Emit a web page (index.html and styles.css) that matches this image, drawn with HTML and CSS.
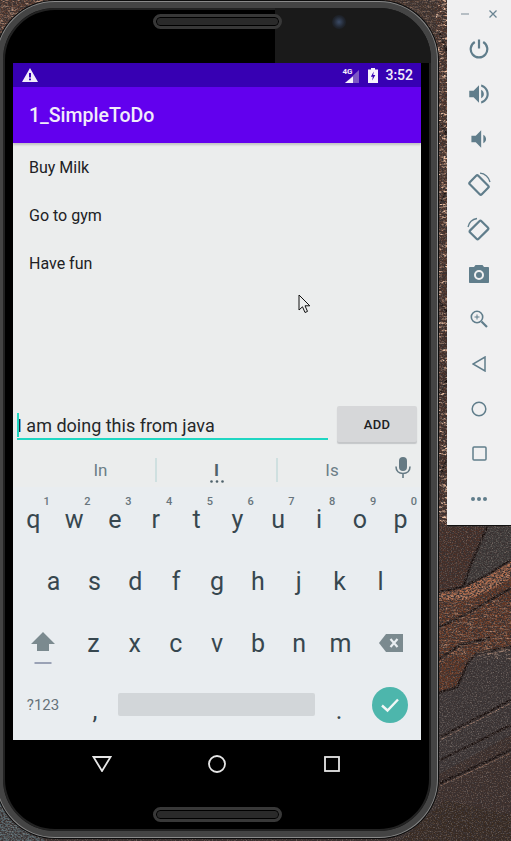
FILE: index.html
```html
<!DOCTYPE html>
<html>
  <head>
    <meta charset="UTF-8">
    <title>1_SimpleToDo</title>
    <link rel="stylesheet" href="styles.css">
  </head>
  <body>
    <svg class="wallpaper" width="511" height="841" viewBox="0 0 511 841">
      <defs>
        <filter id="grain" x="0" y="0" width="100%" height="100%">
          <feTurbulence type="fractalNoise" baseFrequency="0.5 0.7" numOctaves="4" seed="7"/>
          <feColorMatrix values="0 0 0 0 0.04  0 0 0 0 0.03  0 0 0 0 0.03  3.4 0 0 0 -1.2"/>
        </filter>
        <filter id="speck" x="0" y="0" width="100%" height="100%">
          <feTurbulence type="fractalNoise" baseFrequency="0.8" numOctaves="2" seed="21"/>
          <feColorMatrix values="0 0 0 0 0.75  0 0 0 0 0.6  0 0 0 0 0.5  0 3 0 0 -1.5"/>
        </filter>
        <filter id="streak" x="0" y="0" width="100%" height="100%">
          <feTurbulence type="fractalNoise" baseFrequency="0.12 0.45" numOctaves="3" seed="11"/>
          <feColorMatrix values="0 0 0 0 0.85  0 0 0 0 0.52  0 0 0 0 0.36  0 4.5 0 0 -2.2"/>
        </filter>
      </defs>
      <rect width="511" height="841" fill="#3e3330"/>
      <polygon points="0,0 70,0 0,60" fill="#5a3a2d"/>
      <polygon points="380,0 447,0 447,80" fill="#47352c"/>
      <rect x="436" y="0" width="11" height="300" fill="#52352a"/>
      <rect x="436" y="300" width="11" height="227" fill="#472d25"/>
      <polygon points="438,527 487,527 470,567 463,587 438,592" fill="#4a2f26"/>
      <polygon points="487,527 511,527 511,573 463,587 470,567" fill="#42403f"/>
      <polygon points="438,595 467,595 487,587 511,573 511,647 477,653 468,663 457,687 438,693" fill="#693823"/>
      <polygon points="438,590 463,587 487,576 511,560 511,578 487,592 467,600 438,600" fill="#b06c4c"/>
      <polygon points="438,693 457,687 468,663 477,653 511,647 511,735 438,775" fill="#403b3c"/>
      <polygon points="438,775 511,735 511,841 438,841" fill="#3f302b"/>
      <polygon points="0,790 45,841 0,841" fill="#56666c"/>
      <polygon points="400,841 445,800 511,815 511,841" fill="#38291f"/>
      <g fill="none" stroke="#160d0b" stroke-width="2.5">
        <path d="M438 592 L463 587 L487 575 L511 560"/>
        <path d="M438 693 L457 687 L468 663 L477 653 L511 647"/>
        <path d="M487 527 L470 567 L463 587"/>
        <path d="M438 628 L470 612 L511 588"/>
        <path d="M438 660 L460 645 L490 638"/>
        <path d="M440 737 L511 700"/>
        <path d="M440 760 L511 725"/>
        <path d="M440 783 L511 750"/>
        <path d="M438 30 L447 52 M438 120 L447 135 M438 210 L447 190 M438 300 L447 312 M438 395 L447 380 M438 480 L447 460"/>
      </g>
      <g fill="none" stroke="#bb8f78" stroke-width="1" opacity="0.75">
        <path d="M438 596 L467 596 L487 588 L511 574"/>
        <path d="M438 663 L460 648"/>
        <path d="M440 740 L511 703"/>
        <path d="M440 786 L511 753"/>
        <path d="M477 656 L511 650"/>
      </g>
      <rect x="436" y="0" width="11" height="527" filter="url(#streak)"/>
      <rect x="0" y="0" width="70" height="40" filter="url(#streak)" opacity="0.6"/>
      <rect x="400" y="0" width="47" height="60" filter="url(#streak)" opacity="0.35"/>
      <rect x="438" y="600" width="73" height="60" filter="url(#streak)" opacity="0.4"/>
      <rect width="511" height="841" filter="url(#grain)"/>
      <rect width="511" height="841" filter="url(#speck)" opacity="0.3"/>
    </svg>

    <div class="phone">
      <div class="bezel-right"></div>
      <div class="speaker speaker-top"></div>
      <div class="camera"></div>
      <div class="speaker speaker-bottom"></div>

      <div class="screen">
        <div class="statusbar">
          <svg class="warn" width="16" height="14" viewBox="0 0 16 14"><path d="M8 0 L16 14 H0 Z M7 5 V9.5 H9 V5 Z M7 10.5 V12.3 H9 V10.5 Z" fill="#f1ecfa" fill-rule="evenodd"/></svg>
          <span class="spacer"></span>
          <span class="net">4G</span>
          <svg class="signal" width="14" height="13" viewBox="0 0 14 13"><path d="M14 0 V13 H0 Z" fill="#7d58c4"/><path d="M8 6.5 V13 H0 Z" fill="#f6f3fc"/></svg>
          <svg class="battery" width="10" height="15" viewBox="0 0 10 15"><path d="M3 0 H7 V1.5 H10 V15 H0 V1.5 H3 Z M5.8 3.5 L2.8 8.8 H4.8 L4.2 12.6 L7.3 7 H5.2 Z" fill="#f6f3fc" fill-rule="evenodd"/></svg>
          <span class="clock">3:52</span>
        </div>
        <div class="appbar">1_SimpleToDo</div>

        <div class="content">
          <div class="item">Buy Milk</div>
          <div class="item">Go to gym</div>
          <div class="item">Have fun</div>
          <svg class="pointer" width="13" height="20" viewBox="0 0 13 20"><path d="M1 1 V16 L4.5 12.8 L7 18.5 L9.5 17.4 L7 11.8 H11.8 Z" fill="#eceeee" stroke="#111" stroke-width="1"/></svg>
          <div class="addrow">
            <div class="field"><span class="caret"></span>I am doing this from java</div>
            <div class="addbtn">ADD</div>
          </div>
        </div>

        <div class="suggestions">
          <div class="sugg sugg-first">In</div>
          <div class="sugg sugg-main">I
            <svg class="dots" width="14" height="3" viewBox="0 0 14 3"><circle cx="1.5" cy="1.5" r="1.3" fill="#4f626b"/><circle cx="7" cy="1.5" r="1.3" fill="#4f626b"/><circle cx="12.5" cy="1.5" r="1.3" fill="#4f626b"/></svg>
          </div>
          <div class="sugg sugg-last">Is</div>
          <svg class="mic" width="16" height="22" viewBox="0 0 16 22"><rect x="4" y="0" width="8" height="14" rx="4" fill="#657a84"/><path d="M1 9.5 C1 14 4 16.5 8 16.5 C12 16.5 15 14 15 9.5 M8 16.5 V21" fill="none" stroke="#657a84" stroke-width="1.6"/></svg>
        </div>

        <div class="keyboard">
          <div class="row">
            <div class="key">q<sup>1</sup></div>
            <div class="key">w<sup>2</sup></div>
            <div class="key">e<sup>3</sup></div>
            <div class="key">r<sup>4</sup></div>
            <div class="key">t<sup>5</sup></div>
            <div class="key">y<sup>6</sup></div>
            <div class="key">u<sup>7</sup></div>
            <div class="key">i<sup>8</sup></div>
            <div class="key">o<sup>9</sup></div>
            <div class="key">p<sup>0</sup></div>
          </div>
          <div class="row row-home">
            <div class="key">a</div>
            <div class="key">s</div>
            <div class="key">d</div>
            <div class="key">f</div>
            <div class="key">g</div>
            <div class="key">h</div>
            <div class="key">j</div>
            <div class="key">k</div>
            <div class="key">l</div>
          </div>
          <div class="row">
            <div class="key key-wide key-shift">
              <svg width="24" height="34" viewBox="0 0 24 34"><path d="M12 0 L24 12 H18 V19 H6 V12 H0 Z" fill="#7b8a8f"/><rect x="3.5" y="30" width="17" height="2" fill="#9aa2b5"/></svg>
            </div>
            <div class="key">z</div>
            <div class="key">x</div>
            <div class="key">c</div>
            <div class="key">v</div>
            <div class="key">b</div>
            <div class="key">n</div>
            <div class="key">m</div>
            <div class="key key-wide">
              <svg width="24" height="18" viewBox="0 0 24 18"><path d="M7 0 H24 V18 H7 L0 9 Z" fill="#7b8a8f"/><path d="M11.5 5 L18.5 13 M18.5 5 L11.5 13" stroke="#eaeef1" stroke-width="2.2"/></svg>
            </div>
          </div>
          <div class="row">
            <div class="key key-wide key-sym">?123</div>
            <div class="key key-punct">,</div>
            <div class="spacebar"></div>
            <div class="key key-punct">.</div>
            <div class="key key-wide">
              <div class="done">
                <svg width="20" height="16" viewBox="0 0 20 16"><path d="M2 8.5 L7.5 13.5 L18 2.5" fill="none" stroke="#f2f7f6" stroke-width="2.4"/></svg>
              </div>
            </div>
          </div>
        </div>
      </div>

      <div class="navbar">
        <svg width="20" height="16" viewBox="0 0 20 16"><path d="M1.5 1 H18.5 L10 15 Z" fill="none" stroke="#e6e6e6" stroke-width="1.8"/></svg>
        <svg width="18" height="18" viewBox="0 0 18 18"><circle cx="9" cy="9" r="8" fill="none" stroke="#e6e6e6" stroke-width="1.8"/></svg>
        <svg class="nav-square" width="16" height="16" viewBox="0 0 16 16"><rect x="1" y="1" width="14" height="14" fill="none" stroke="#e6e6e6" stroke-width="1.8"/></svg>
      </div>
    </div>

    <div class="toolbar">
      <div class="winbtns">
        <svg width="8" height="8" viewBox="0 0 8 8"><path d="M0 4 H8" stroke="#a3aeb4" stroke-width="1.5"/></svg>
        <svg width="8" height="8" viewBox="0 0 8 8"><path d="M0.5 0.5 L7.5 7.5 M7.5 0.5 L0.5 7.5" stroke="#6a8492" stroke-width="1.3"/></svg>
      </div>
      <div class="tool">
        <svg width="20" height="20" viewBox="0 0 20 20"><path d="M5.8 3 A8.3 8.3 0 1 0 14.2 3" fill="none" stroke="#607d8b" stroke-width="2.2"/><path d="M10 0.5 V9.5" stroke="#607d8b" stroke-width="2.2"/></svg>
      </div>
      <div class="tool">
        <svg width="26" height="26" viewBox="0 0 24 24"><path fill="#607d8b" d="M3 9v6h4l5 5V4L7 9H3zm13.5 3c0-1.77-1.02-3.29-2.5-4.03v8.05c1.48-.73 2.5-2.25 2.5-4.02zM14 3.23v2.06c2.89.86 5 3.54 5 6.71s-2.11 5.85-5 6.71v2.06c4.01-.91 7-4.49 7-8.77s-2.99-7.86-7-8.77z"/></svg>
      </div>
      <div class="tool">
        <svg width="26" height="26" viewBox="0 0 24 24"><path fill="#607d8b" d="M18.5 12c0-1.77-1.02-3.29-2.5-4.03v8.05c1.48-.73 2.5-2.25 2.5-4.02zM5 9v6h4l5 5V4L9 9H5z"/></svg>
      </div>
      <div class="tool">
        <svg width="24" height="24" viewBox="0 0 24 24"><rect x="3.5" y="7" width="17" height="12" rx="1.5" transform="rotate(45 12 13)" fill="none" stroke="#607d8b" stroke-width="2.2"/><path d="M13 1.2 A11 11 0 0 1 23 10" fill="none" stroke="#607d8b" stroke-width="1.3"/></svg>
      </div>
      <div class="tool">
        <svg width="24" height="24" viewBox="0 0 24 24"><rect x="4" y="7" width="16" height="12" rx="1.5" transform="rotate(-45 12 13)" fill="none" stroke="#607d8b" stroke-width="2.2"/><path d="M1 10 A11 11 0 0 1 10 1.5" fill="none" stroke="#607d8b" stroke-width="1.3"/></svg>
      </div>
      <div class="tool">
        <svg width="20" height="18" viewBox="0 0 20 18"><path fill="#607d8b" fill-rule="evenodd" d="M6.5 0 H13.5 L15 2 H19 C19.6 2 20 2.4 20 3 V17 C20 17.6 19.6 18 19 18 H1 C0.4 18 0 17.6 0 17 V3 C0 2.4 0.4 2 1 2 H5 Z M10 5 A5 5 0 1 0 10 15 A5 5 0 1 0 10 5 Z"/><circle cx="10" cy="10" r="3" fill="#607d8b"/></svg>
      </div>
      <div class="tool">
        <svg width="18" height="18" viewBox="0 0 18 18"><circle cx="7" cy="7" r="5.7" fill="none" stroke="#607d8b" stroke-width="1.6"/><path d="M11.5 11.5 L17 17" stroke="#607d8b" stroke-width="2.2"/><path d="M7 4.5 V9.5 M4.5 7 H9.5" stroke="#607d8b" stroke-width="1"/></svg>
      </div>
      <div class="tool">
        <svg width="14" height="16" viewBox="0 0 14 16"><path d="M13 1 V15 L1 8 Z" fill="none" stroke="#607d8b" stroke-width="1.5"/></svg>
      </div>
      <div class="tool">
        <svg width="16" height="16" viewBox="0 0 16 16"><circle cx="8" cy="8" r="6.8" fill="none" stroke="#607d8b" stroke-width="1.5"/></svg>
      </div>
      <div class="tool">
        <svg width="15" height="15" viewBox="0 0 15 15"><rect x="1" y="1" width="13" height="13" rx="1" fill="none" stroke="#607d8b" stroke-width="1.5"/></svg>
      </div>
      <div class="tool">
        <svg width="16" height="4" viewBox="0 0 16 4"><circle cx="2" cy="2" r="2" fill="#607d8b"/><circle cx="8" cy="2" r="2" fill="#607d8b"/><circle cx="14" cy="2" r="2" fill="#607d8b"/></svg>
      </div>
    </div>
  </body>
</html>
```
FILE: styles.css
```css
html, body {
  margin: 0;
  padding: 0;
}

body {
  position: relative;
  width: 511px;
  height: 841px;
  overflow: hidden;
  background-color: #3e3330;
  font-family: Roboto, "Liberation Sans", sans-serif;
}

.wallpaper {
  position: absolute;
  left: 0;
  top: 0;
}

/* phone sits on the desktop, so it is placed by hand */
.phone {
  position: absolute;
  left: -3px;
  top: 2px;
  width: 440px;
  height: 835px;
  padding-top: 55px;
  padding-left: 10px;
  box-sizing: border-box;
  background-color: #000;
  border: 6px solid #444;
  border-radius: 58px;
  box-shadow: 0 0 0 1px #8a8a8a, 0 0 0 2px #0c0c0c, inset 0 0 0 2px #222;
  overflow: hidden;
}

.bezel-right {
  position: absolute;
  left: 272px;
  top: 0;
  width: 170px;
  height: 55px;
  background-color: #1a1a1a;
}

.speaker {
  position: absolute;
  left: 150px;
  width: 129px;
  height: 15px;
  box-sizing: border-box;
  background-color: #2a2a2a;
  border: 3px solid #383838;
  border-radius: 8px;
  box-shadow: inset 0 0 0 1px #000;
}

.speaker-top {
  top: 6px;
}

.speaker-bottom {
  top: 799px;
}

.camera {
  position: absolute;
  left: 329px;
  top: 7px;
  width: 14px;
  height: 14px;
  border-radius: 50%;
  background: radial-gradient(circle, #3b4b66 0, #20252e 55%, #151515 100%);
}

.screen {
  position: relative;
  width: 408px;
  height: 677px;
  display: flex;
  flex-direction: column;
  background-color: #ebeded;
}

.statusbar {
  height: 24px;
  flex: none;
  display: flex;
  align-items: center;
  padding: 0 8px 0 9px;
  background-color: #3700b3;
  color: #f1ecfa;
}

.spacer {
  flex: 1;
}

.net {
  font-size: 8px;
  font-weight: 700;
  margin-right: -7px;
  margin-top: -7px;
}

.signal {
  margin-top: 2px;
  margin-right: 9px;
}

.battery {
  margin-right: 7px;
}

.clock {
  font-size: 14px;
  font-weight: 500;
}

.appbar {
  height: 56px;
  flex: none;
  box-sizing: border-box;
  padding: 0 16px;
  display: flex;
  align-items: center;
  background-color: #6200ee;
  color: #f1ecfa;
  font-size: 19.5px;
  font-weight: 500;
  box-shadow: 0 2px 2px rgba(0, 0, 0, 0.18);
  position: relative;
}

.content {
  position: relative;
  flex: 1;
  display: flex;
  flex-direction: column;
}

.item {
  height: 48px;
  flex: none;
  display: flex;
  align-items: center;
  padding: 0 16px;
  font-size: 16px;
  color: #202124;
}

.pointer {
  position: absolute;
  left: 285px;
  top: 151px;
}

.addrow {
  margin-top: auto;
  margin-bottom: 9px;
  display: flex;
  align-items: flex-start;
  padding: 0 4px;
  gap: 9px;
}

.field {
  position: relative;
  flex: none;
  width: 311px;
  height: 32px;
  box-sizing: border-box;
  padding-top: 6px;
  font-size: 18px;
  line-height: 24px;
  color: #25282a;
  border-bottom: 2px solid #1fd6c2;
  white-space: nowrap;
}

.caret {
  position: absolute;
  left: 0;
  top: 5px;
  width: 2px;
  height: 24px;
  background-color: #1fd6c2;
}

.addbtn {
  flex: none;
  width: 80px;
  height: 36px;
  margin-top: -2px;
  display: flex;
  align-items: center;
  justify-content: center;
  background-color: #d6d7d9;
  border-radius: 2px;
  box-shadow: 0 2px 1px #c4c6c8;
  font-size: 13px;
  font-weight: 500;
  letter-spacing: 0.3px;
  color: #202124;
}

.suggestions {
  position: relative;
  height: 36px;
  flex: none;
  display: flex;
  align-items: center;
  padding-left: 33px;
  padding-top: 1px;
  box-sizing: border-box;
  color: #6b7e87;
  font-size: 17px;
}

.sugg {
  position: relative;
  width: 121px;
  height: 24px;
  box-sizing: border-box;
  display: flex;
  align-items: center;
  justify-content: center;
  border-right: 2px solid #cfe0e0;
}

.sugg-first {
  width: 111px;
}

.sugg-main {
  color: #4f626b;
  font-weight: 700;
}

.sugg-last {
  width: 108px;
  border-right: none;
}

.dots {
  position: absolute;
  left: 53px;
  top: 22px;
}

.mic {
  position: absolute;
  right: 10px;
  top: 6px;
}

.keyboard {
  height: 253px;
  flex: none;
  box-sizing: border-box;
  padding-top: 2px;
  display: flex;
  flex-direction: column;
  background-color: #e9edf0;
}

.row {
  height: 61.7px;
  flex: none;
  display: flex;
  align-items: center;
}

.row-home {
  padding: 0 20px;
}

.key {
  position: relative;
  flex: 1;
  height: 100%;
  display: flex;
  align-items: center;
  justify-content: center;
  font-size: 25px;
  color: #37474f;
}

.key sup {
  position: absolute;
  right: 4px;
  top: 6px;
  font-size: 11px;
  line-height: 13px;
  font-weight: 500;
  color: #68757c;
}

.key-wide {
  flex: none;
  width: 60px;
}

.key-shift svg {
  margin-top: 12px;
}

.key-sym {
  font-size: 15px;
  color: #667279;
}

.key-punct {
  flex: none;
  width: 44px;
  padding-top: 12px;
  box-sizing: border-box;
}

.spacebar {
  flex: 1;
  height: 23px;
  margin: 0 2px 0 1px;
  background-color: #d2d6d9;
  border-radius: 2px;
}

.done {
  width: 36px;
  height: 36px;
  margin-right: 2px;
  border-radius: 50%;
  background-color: #4db6ac;
  display: flex;
  align-items: center;
  justify-content: center;
}

.navbar {
  height: 48px;
  width: 408px;
  display: flex;
  align-items: center;
  gap: 96px;
  box-sizing: border-box;
  padding-left: 79px;
}

.nav-square {
  margin-left: 2px;
}

.toolbar {
  position: absolute;
  left: 447px;
  top: 0;
  width: 64px;
  height: 526px;
  box-sizing: border-box;
  padding-top: 10px;
  display: flex;
  flex-direction: column;
  background-color: #f0f0f1;
  border-bottom: 1px solid #111;
}

.winbtns {
  height: 16px;
  display: flex;
  justify-content: space-between;
  padding: 0 14px;
}

.tool {
  height: 45px;
  flex: none;
  display: flex;
  align-items: center;
  justify-content: center;
}
```
